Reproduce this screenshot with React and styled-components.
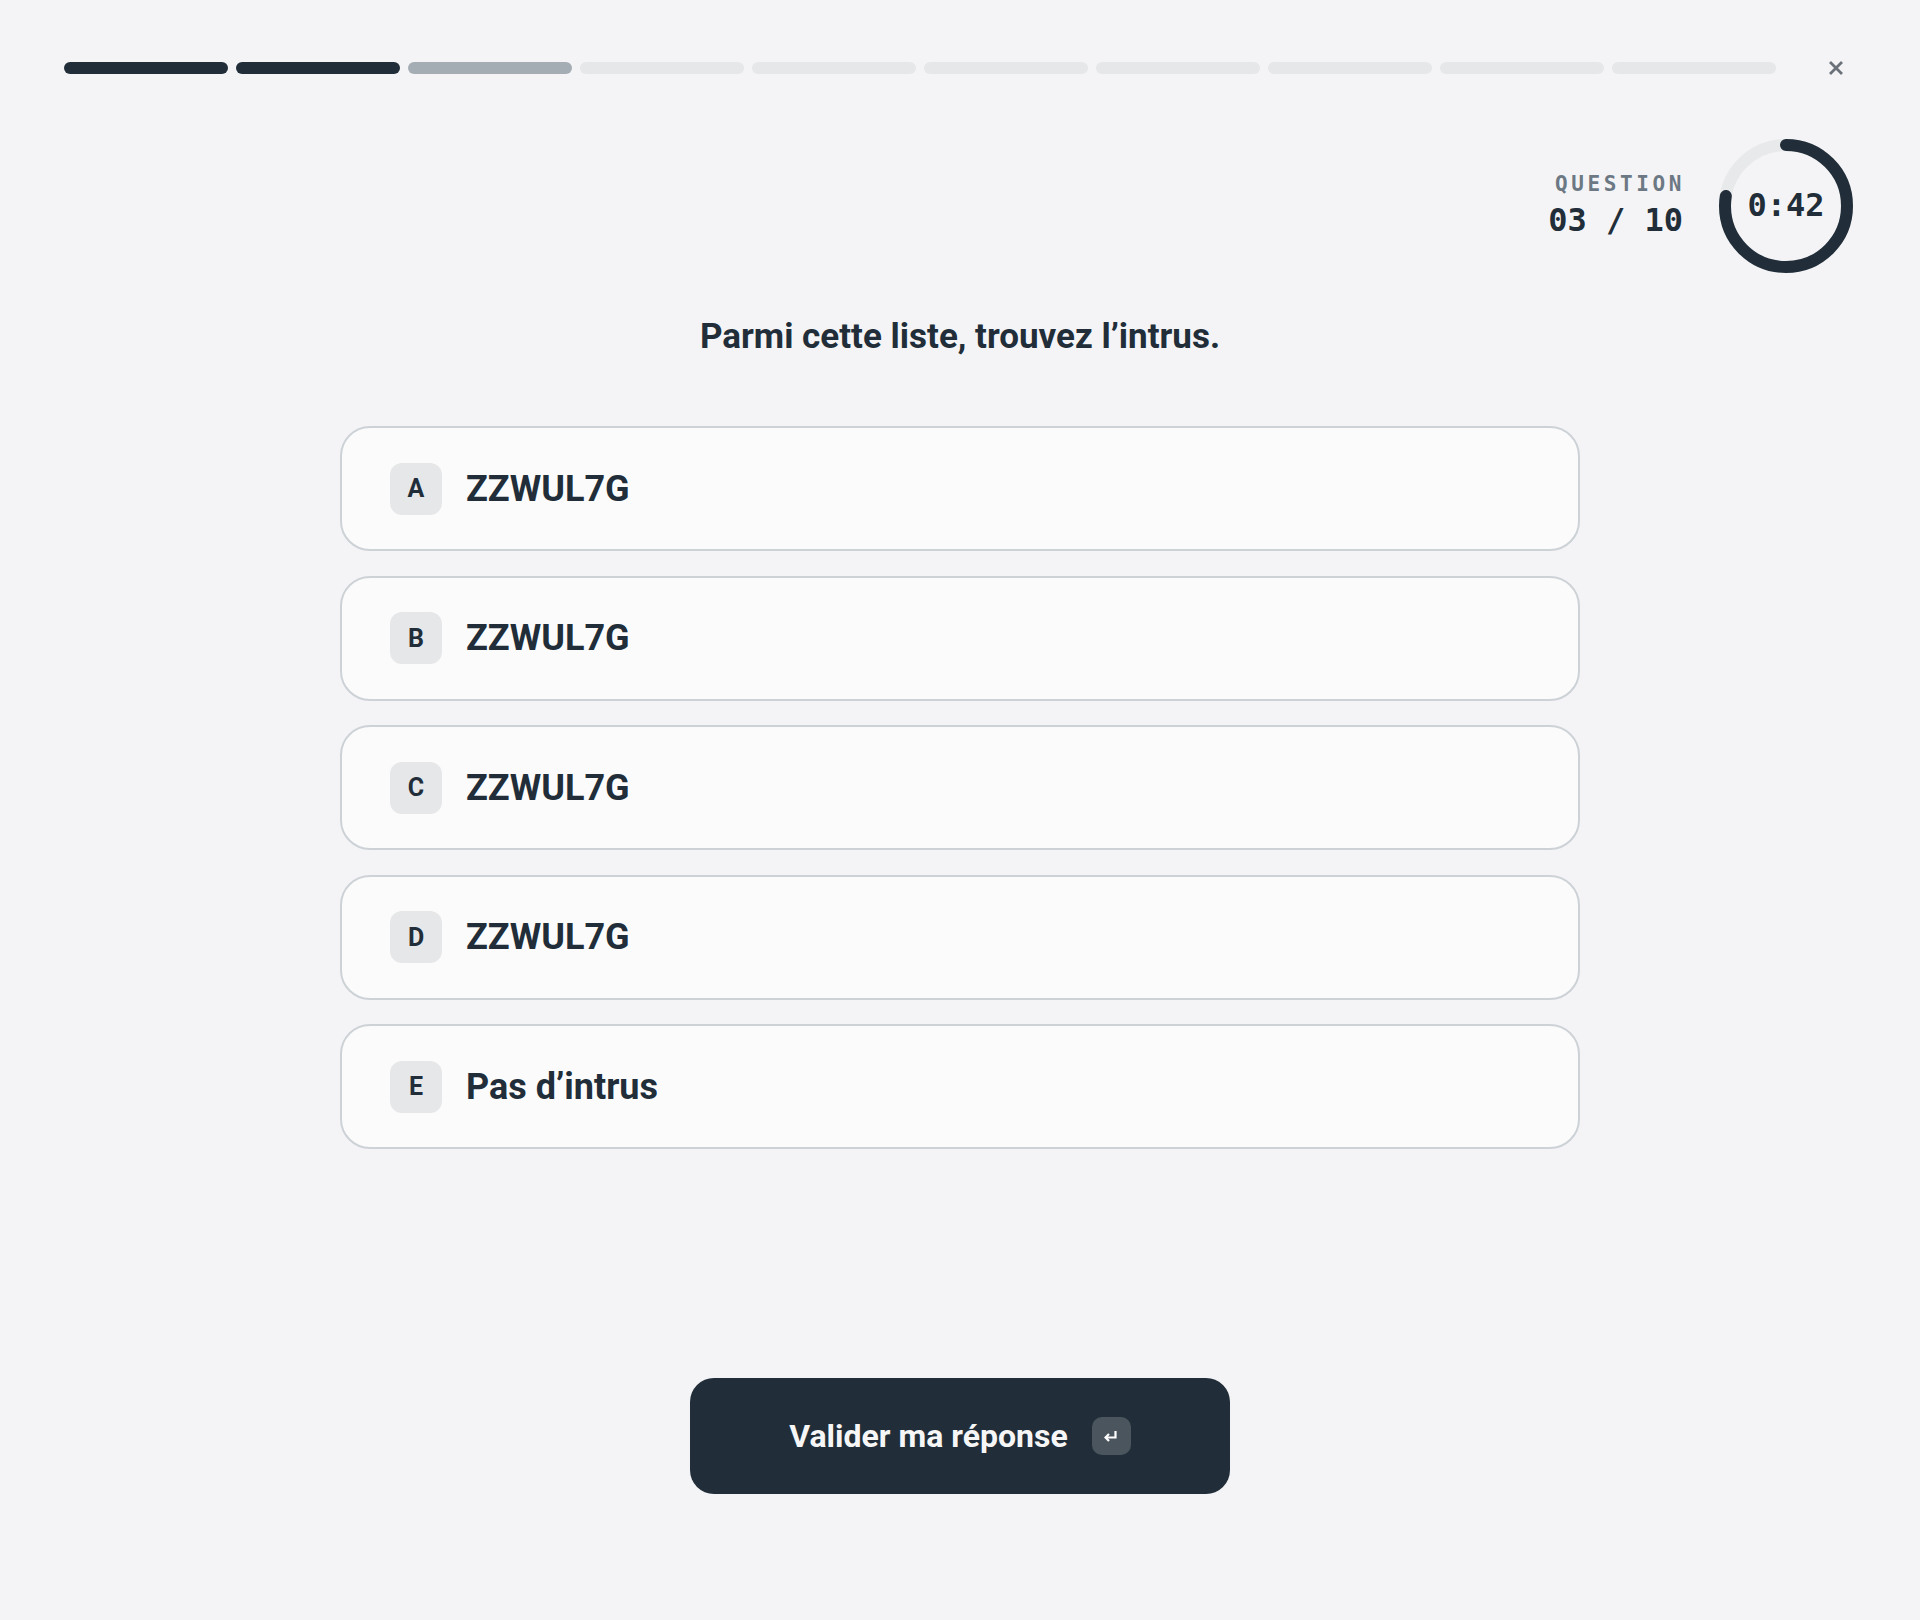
import React from "react";
import styled, { createGlobalStyle } from "styled-components";

const GlobalStyle = createGlobalStyle`
  html, body { margin: 0; padding: 0; background: #f4f4f6; }
  * { box-sizing: border-box; }
`;

const DARK = "#212e39";

const Page = styled.div`
  min-height: 100vh;
  background: #f4f4f6;
  font-family: Roboto, "Liberation Sans", sans-serif;
  color: ${DARK};
  display: flex;
  flex-direction: column;
`;

const Header = styled.header`
  display: flex;
  align-items: center;
  gap: 40px;
  padding: 48px 64px 0 64px;
`;

const Progress = styled.div`
  flex: 1;
  display: flex;
  gap: 8px;
`;

const Segment = styled.div`
  flex: 1;
  height: 12px;
  border-radius: 6px;
  background: ${(p) =>
    p.$state === "done" ? DARK : p.$state === "current" ? "#a5adb4" : "#e6e7e9"};
`;

const CloseButton = styled.button`
  width: 40px;
  height: 40px;
  border: none;
  background: transparent;
  padding: 0;
  display: flex;
  align-items: center;
  justify-content: center;
  color: #6b7178;
  cursor: pointer;
`;

const TimerRow = styled.div`
  display: flex;
  justify-content: flex-end;
  align-items: center;
  gap: 36px;
  margin-top: 51px;
  padding-right: 67px;
`;

const QuestionInfo = styled.div`
  display: flex;
  flex-direction: column;
  align-items: flex-end;
  font-family: "DejaVu Sans Mono", "Liberation Mono", monospace;
  font-weight: 700;
`;

const Label = styled.div`
  font-size: 21px;
  line-height: 24px;
  letter-spacing: 3.6px;
  margin-right: -2px;
  color: #6c7883;
`;

const Count = styled.div`
  font-size: 32px;
  line-height: 40px;
  margin-top: 4px;
  color: ${DARK};
`;

const Timer = styled.div`
  position: relative;
  width: 134px;
  height: 134px;
  display: flex;
  align-items: center;
  justify-content: center;
`;

const TimerSvg = styled.svg`
  position: absolute;
  inset: 0;
`;

const TimerText = styled.span`
  position: relative;
  top: -1px;
  font-family: "DejaVu Sans Mono", "Liberation Mono", monospace;
  font-weight: 700;
  font-size: 32px;
  color: ${DARK};
`;

const Title = styled.h1`
  margin: 42px 0 0 0;
  text-align: center;
  font-size: 35px;
  line-height: 44px;
  font-weight: 700;
  color: ${DARK};
`;

const Options = styled.div`
  width: 1240px;
  margin: 67px auto 0 auto;
  display: flex;
  flex-direction: column;
  gap: 24.5px;
`;

const Option = styled.button`
  height: 125px;
  display: flex;
  align-items: center;
  gap: 24px;
  padding: 0 48px;
  border: 2px solid #cdd2d7;
  border-radius: 30px;
  background: #fbfbfb;
  font-family: inherit;
  cursor: pointer;
  text-align: left;
`;

const Badge = styled.span`
  width: 52px;
  height: 52px;
  border-radius: 12px;
  background: #e6e7e9;
  display: flex;
  align-items: center;
  justify-content: center;
  font-size: 25px;
  font-weight: 700;
  color: ${DARK};
`;

const OptionText = styled.span`
  font-size: 36px;
  font-weight: 700;
  color: ${DARK};
`;

const Submit = styled.button`
  width: 540px;
  height: 116px;
  margin: 229px auto 0 auto;
  border: none;
  border-radius: 24px;
  background: ${DARK};
  color: #f6f6f7;
  display: flex;
  align-items: center;
  justify-content: center;
  gap: 24px;
  font-family: inherit;
  font-size: 32px;
  font-weight: 700;
  cursor: pointer;
`;

const Kbd = styled.span`
  width: 39px;
  height: 38px;
  border-radius: 10px;
  background: #4b555e;
  display: flex;
  align-items: center;
  justify-content: center;
`;

const options = [
  { key: "A", label: "ZZWUL7G" },
  { key: "B", label: "ZZWUL7G" },
  { key: "C", label: "ZZWUL7G" },
  { key: "D", label: "ZZWUL7G" },
  { key: "E", label: "Pas d’intrus" },
];

const R = 61;
const C = 2 * Math.PI * R;

export default function App() {
  const segments = Array.from({ length: 10 }, (_, i) =>
    i < 2 ? "done" : i === 2 ? "current" : "todo"
  );
  const frac = 0.775;
  return (
    <Page>
      <GlobalStyle />
      <Header>
        <Progress>
          {segments.map((s, i) => (
            <Segment key={i} $state={s} />
          ))}
        </Progress>
        <CloseButton aria-label="Fermer">
          <svg width="16" height="16" viewBox="0 0 16 16" fill="none">
            <path d="M2 2L14 14M14 2L2 14" stroke="currentColor" strokeWidth="2.8" strokeLinecap="butt" />
          </svg>
        </CloseButton>
      </Header>

      <TimerRow>
        <QuestionInfo>
          <Label>QUESTION</Label>
          <Count>03 / 10</Count>
        </QuestionInfo>
        <Timer>
          <TimerSvg width="134" height="134" viewBox="0 0 134 134">
            <circle cx="67" cy="67" r={R} fill="none" stroke="#e8e9eb" strokeWidth="12" />
            <circle
              cx="67"
              cy="67"
              r={R}
              fill="none"
              stroke={DARK}
              strokeWidth="12"
              strokeLinecap="round"
              strokeDasharray={`${C * frac} ${C}`}
              transform="rotate(-90 67 67)"
            />
          </TimerSvg>
          <TimerText>0:42</TimerText>
        </Timer>
      </TimerRow>

      <Title>Parmi cette liste, trouvez l’intrus.</Title>

      <Options>
        {options.map((o) => (
          <Option key={o.key}>
            <Badge>{o.key}</Badge>
            <OptionText>{o.label}</OptionText>
          </Option>
        ))}
      </Options>

      <Submit>
        Valider ma réponse
        <Kbd>
          <svg width="14" height="12" viewBox="0 0 14 12" fill="none">
            <path d="M11.5 1V7.5H3" stroke="#ffffff" strokeWidth="2.2" />
            <path d="M5 4L1.5 7.5L5 11" stroke="#ffffff" strokeWidth="2.2" fill="none" />
          </svg>
        </Kbd>
      </Submit>
    </Page>
  );
}
